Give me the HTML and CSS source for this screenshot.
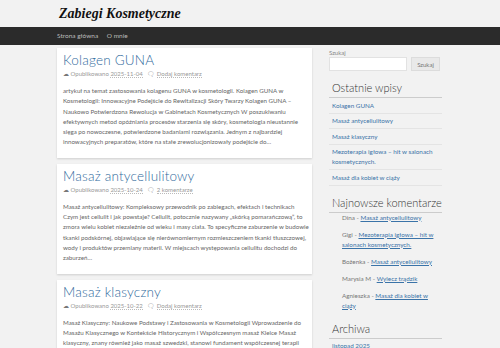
FILE: index.html
```html
<!DOCTYPE html>
<html lang="pl">
<head>
  <meta charset="UTF-8" />
  <title>Zabiegi Kosmetyczne</title>
  <link rel="stylesheet" href="styles.css">
</head>
<body>
  <header class="site-header">
    <div class="wrap">
      <a class="site-title" href="#">Zabiegi Kosmetyczne</a>
    </div>
  </header>

  <nav class="main-nav">
    <div class="wrap">
      <a href="#">Strona główna</a>
      <a href="#">O mnie</a>
    </div>
  </nav>

  <div class="wrap page">
    <main class="posts">
      <article class="post">
        <h2 class="post-title"><a href="#">Kolagen GUNA</a></h2>
        <div class="post-meta">
          <span class="ico">&#x2601;</span> Opublikowano <a class="date" href="#">2025-11-04</a>
          <span class="ico">&#x1F5E8;</span> <a class="comments" href="#">Dodaj komentarz</a>
        </div>
        <p class="excerpt">artykuł na temat zastosowania kolagenu GUNA w kosmetologii. Kolagen GUNA w Kosmetologii: Innowacyjne Podejście do Rewitalizacji Skóry Twarzy Kolagen GUNA – Naukowo Potwierdzona Rewolucja w Gabinetach Kosmetycznych W poszukiwaniu efektywnych metod opóźniania procesów starzenia się skóry, kosmetologia nieustannie sięga po nowoczesne, potwierdzone badaniami rozwiązania. Jednym z najbardziej innowacyjnych preparatów, które na stałe zrewolucjonizowały podejście do…</p>
      </article>

      <article class="post">
        <h2 class="post-title"><a href="#">Masaż antycellulitowy</a></h2>
        <div class="post-meta">
          <span class="ico">&#x2601;</span> Opublikowano <a class="date" href="#">2025-10-24</a>
          <span class="ico">&#x1F5E8;</span> <a class="comments" href="#">2 komentarze</a>
        </div>
        <p class="excerpt">Masaż antycellulitowy: Kompleksowy przewodnik po zabiegach, efektach i technikach Czym jest cellulit i jak powstaje? Cellulit, potocznie nazywany „skórką pomarańczową”, to zmora wielu kobiet niezależnie od wieku i masy ciała. To specyficzne zaburzenie w budowie tkanki podskórnej, objawiające się nierównomiernym rozmieszczeniem tkanki tłuszczowej, wody i produktów przemiany materii. W miejscach występowania cellulitu dochodzi do zaburzeń…</p>
      </article>

      <article class="post">
        <h2 class="post-title"><a href="#">Masaż klasyczny</a></h2>
        <div class="post-meta">
          <span class="ico">&#x2601;</span> Opublikowano <a class="date" href="#">2025-10-22</a>
          <span class="ico">&#x1F5E8;</span> <a class="comments" href="#">Dodaj komentarz</a>
        </div>
        <p class="excerpt">Masaż Klasyczny: Naukowe Podstawy i Zastosowania w Kosmetologii Wprowadzenie do Masażu Klasycznego w Kontekście Historycznym i Współczesnym masaż Kleice Masaż klasyczny, znany również jako masaż szwedzki, stanowi fundament współczesnej terapii manualnej i jest jedną z najstarszych metod pracy z ciałem, łączącą wiedzę anatomiczną z praktyką terapeutyczną stosowaną w gabinetach…</p>
      </article>

      <article class="post">
        <h2 class="post-title"><a href="#">Mezoterapia igłowa – hit w salonach kosmetycznych.</a></h2>
        <div class="post-meta">
          <span class="ico">&#x2601;</span> Opublikowano <a class="date" href="#">2025-10-18</a>
          <span class="ico">&#x1F5E8;</span> <a class="comments" href="#">1 komentarz</a>
        </div>
        <p class="excerpt">Mezoterapia igłowa to jeden z najpopularniejszych zabiegów odmładzających. Polega na wprowadzeniu do skóry za pomocą cienkich igieł substancji odżywczych, które pobudzają fibroblasty do produkcji kolagenu i elastyny, poprawiając nawilżenie, jędrność i koloryt skóry…</p>
      </article>
    </main>

    <aside class="sidebar">
      <form class="search">
        <label for="s">Szukaj</label>
        <div class="search-row">
          <input type="text" id="s" />
          <button type="submit">Szukaj</button>
        </div>
      </form>

      <section class="widget">
        <h3>Ostatnie wpisy</h3>
        <ul class="recent">
          <li><a href="#">Kolagen GUNA</a></li>
          <li><a href="#">Masaż antycellulitowy</a></li>
          <li><a href="#">Masaż klasyczny</a></li>
          <li><a href="#">Mezoterapia igłowa – hit w salonach kosmetycznych.</a></li>
          <li><a href="#">Masaż dla kobiet w ciąży</a></li>
        </ul>
      </section>

      <section class="widget widget-comments">
        <h3>Najnowsze komentarze</h3>
        <ul class="comments-list">
          <li>Dina - <a href="#">Masaż antycellulitowy</a></li>
          <li>Gigi - <a href="#">Mezoterapia igłowa – hit w salonach kosmetycznych.</a></li>
          <li>Bożenka - <a href="#">Masaż antycellulitowy</a></li>
          <li>Marysia M - <a href="#">Wylecz trądzik</a></li>
          <li>Agnieszka - <a href="#">Masaż dla kobiet w ciąży</a></li>
        </ul>
      </section>

      <section class="widget widget-archive">
        <h3>Archiwa</h3>
        <ul class="recent">
          <li><a href="#">listopad 2025</a></li>
          <li><a href="#">październik 2025</a></li>
          <li><a href="#">wrzesień 2025</a></li>
        </ul>
      </section>
    </aside>
  </div>
</body>
</html>
```

FILE: styles.css
```css
html, body {
  margin: 0;
  padding: 0;
  background-color: #f2f2f2;
  font-family: 'Lato', 'Open Sans', sans-serif;
  color: #666;
}

::-webkit-scrollbar {
  width: 7px;
}

::-webkit-scrollbar-track {
  background-color: #ececec;
}

::-webkit-scrollbar-thumb {
  background-color: #8c8c8c;
  border: 2px solid #ececec;
}

a {
  color: #3a73a8;
  text-decoration: none;
}

.wrap {
  width: 386px;
  margin: 0 auto;
}

.site-header {
  height: 27px;
  display: flex;
  align-items: center;
}

.site-title {
  display: block;
  margin-left: 2px;
  font-family: 'Liberation Serif', serif;
  font-style: italic;
  font-weight: bold;
  font-size: 14px;
  color: #111;
}

.main-nav {
  background-color: #2b2b2b;
  height: 18px;
  line-height: 18px;
  font-size: 6.5px;
}

.main-nav a {
  color: #bbb;
  margin-right: 7px;
}

.page {
  display: flex;
  gap: 17px;
  padding-top: 3px;
}

.posts {
  width: 255px;
  flex-shrink: 0;
}

.post {
  background-color: #fff;
  box-shadow: 0 1px 2px rgba(0, 0, 0, 0.15);
  padding: 3px 2px 10px 6px;
  margin-bottom: 6px;
}

.post-title {
  margin: 0;
  font-size: 13.5px;
  font-weight: 300;
  line-height: 19px;
  letter-spacing: 0.2px;
}

.post-title a {
  color: #2f6a9c;
}

.post-meta {
  font-size: 6px;
  color: #999;
}

.post-meta a {
  color: #999;
  border-bottom: 1px dotted #bbb;
}

.post-meta .ico {
  font-size: 6px;
  color: #777;
}

.post-meta .date {
  margin-right: 3px;
}

.excerpt {
  margin: 9px 0 0;
  font-size: 6.2px;
  line-height: 10.3px;
  color: #666;
}

.sidebar {
  width: 113px;
  flex-shrink: 0;
  font-size: 6.3px;
}

.search label {
  display: block;
  color: #888;
  font-size: 6px;
  margin-top: 1px;
}

.search-row {
  display: flex;
  gap: 4px;
  margin-top: 1px;
}

.search input {
  width: 78px;
  height: 14px;
  box-sizing: border-box;
  border: 1px solid #e2e2e2;
  background-color: #fff;
  padding: 0;
}

.search button {
  width: 29px;
  height: 14px;
  padding: 0;
  border: 1px solid #dcdcdc;
  background-color: #e9e9e9;
  color: #777;
  font-family: inherit;
  font-size: 6px;
}

.widget h3 {
  margin: 10px 0 0;
  padding: 0 0 3px 3px;
  font-size: 11px;
  font-weight: 300;
  color: #333;
  border-bottom: 1px solid #ccc;
}

.widget-archive h3 {
  margin-top: 4px;
}

.recent {
  list-style: none;
  margin: 0;
  padding: 0;
}

.recent li {
  padding: 2.5px 0 2px 3px;
  line-height: 10px;
  border-bottom: 1px solid #e4e4e4;
}

.comments-list {
  margin: 0;
  padding: 0 0 0 13px;
  list-style: none;
  color: #777;
}

.comments-list li {
  line-height: 10px;
  padding: 0 0 7px;
}

.comments-list a {
  text-decoration: underline;
}
```
